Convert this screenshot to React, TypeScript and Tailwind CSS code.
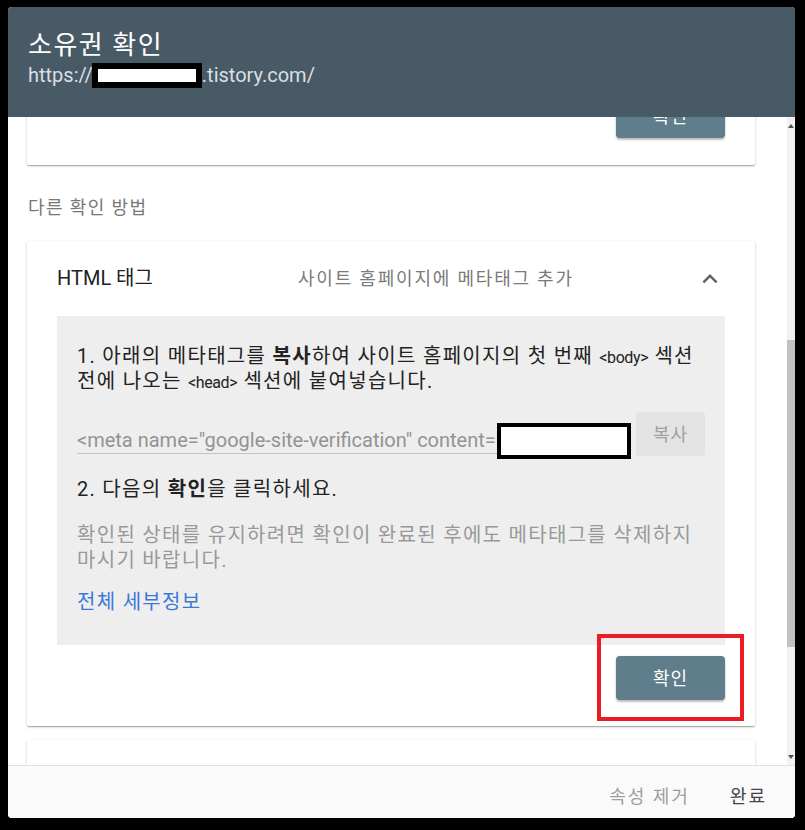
import React from "react";

export default function App() {
  return (
    <div className="w-[805px] h-[830px] bg-black pl-[8px] pt-[7px] pr-[10px] pb-[12px] font-[Roboto,'Noto_Sans_CJK_KR',sans-serif]">
      <div className="h-full flex flex-col bg-white rounded-[4px] overflow-hidden">
        {/* Header */}
        <header className="h-[110px] shrink-0 bg-[#485a66] pl-[20px] pt-[22px]">
          <div className="text-[26px] leading-[32px] text-white tracking-[1.5px]">소유권 확인</div>
          <div className="flex items-center text-[20px] leading-[28px] text-[#d9dfe3]">
            <span>https://</span>
            <span className="inline-block w-[110px] h-[25px] -ml-[1px] bg-white border-[6px] border-black"></span>
            <span>.tistory.com/</span>
          </div>
        </header>

        {/* Scroll area */}
        <div className="flex-1 min-h-0 flex">
          <div className="flex-1 overflow-hidden pl-[19px] pr-[32px]">
            {/* Card 1 (scrolled partially out) */}
            <div className="-mt-[72px] h-[120px] bg-white rounded-[2px] shadow-[0_1px_3px_rgba(0,0,0,0.2),0_1px_1px_rgba(0,0,0,0.14),0_2px_1px_-1px_rgba(0,0,0,0.12)] flex items-end justify-end pr-[30px] pb-[27px]">
              <button className="w-[109px] h-[44px] rounded-[4px] bg-[#607d8b] text-white text-[18px] tracking-[1px] shadow-[0_2px_2px_rgba(0,0,0,0.24),0_0_2px_rgba(0,0,0,0.12)]">
                확인
              </button>
            </div>

            <div className="mt-[31px] text-[18px] leading-[24px] text-[#777777] pl-[1px] tracking-[1.4px]">다른 확인 방법</div>

            {/* Card 2 */}
            <div className="mt-[21px] bg-white rounded-[2px] shadow-[0_1px_3px_rgba(0,0,0,0.2),0_1px_1px_rgba(0,0,0,0.14),0_2px_1px_-1px_rgba(0,0,0,0.12)] px-[30px] pb-[26px]">
              <div className="h-[75px] flex items-center">
                <div className="w-[241px] text-[20px] leading-[25px] text-[#212121]">HTML 태그</div>
                <div className="flex-1 text-[18px] leading-[24px] text-[#7a7a7a] tracking-[1.8px]">사이트 홈페이지에 메타태그 추가</div>
                <svg width="30" height="30" viewBox="0 0 24 24" className="shrink-0">
                  <path d="M12 8l-6 6 1.41 1.41L12 10.83l4.59 4.58L18 14z" fill="#5f6368" />
                </svg>
              </div>

              <div className="bg-[#eeeeee] px-[20px] pt-[28px] pb-[30px] text-[20px] leading-[25px]">
                <p className="text-[#222222] tracking-[1.3px] break-keep">
                  1. 아래의 메타태그를 <b className="font-bold">복사</b>하여 사이트 홈페이지의 첫 번째{" "}
                  <span className="text-[16px] leading-none tracking-[-0.4px]">&lt;body&gt;</span> 섹션 전에 나오는{" "}
                  <span className="text-[16px] leading-none tracking-[-0.4px]">&lt;head&gt;</span> 섹션에 붙여넣습니다.
                </p>

                <div className="relative mt-[18px] h-[44px] flex items-end gap-[16px]">
                  <div className="flex-1 mb-[2px] border-b border-[#c4c4c4] overflow-hidden whitespace-nowrap text-[#939393]">
                    &lt;meta name="google-site-verification" content="xxxxxxxxxxxxxxxxxxxxxxxxxxxxxx" /&gt;
                  </div>
                  <button className="w-[69px] h-[44px] shrink-0 self-start rounded-[4px] bg-[#e3e3e3] text-[18px] text-[#a0a0a0] tracking-[1px]">
                    복사
                  </button>
                  <div className="absolute left-[420px] top-[11px] w-[134px] h-[36px] bg-white border-[4px] border-black"></div>
                </div>

                <p className="mt-[21px] text-[#222222] tracking-[1.3px] break-keep">
                  2. 다음의 <b className="font-bold">확인</b>을 클릭하세요.
                </p>

                <p className="mt-[21px] text-[#999999] tracking-[1.3px] break-keep">
                  확인된 상태를 유지하려면 확인이 완료된 후에도 메타태그를 삭제하지 마시기 바랍니다.
                </p>

                <p className="mt-[17px] text-[#3c78d8] tracking-[1.3px]">전체 세부정보</p>
              </div>

              <div className="mt-[11px] flex justify-end">
                <div className="relative">
                  <button className="w-[109px] h-[44px] rounded-[4px] bg-[#607d8b] text-white text-[18px] tracking-[1px] shadow-[0_2px_2px_rgba(0,0,0,0.24),0_0_2px_rgba(0,0,0,0.12)]">
                    확인
                  </button>
                  <div className="absolute -left-[19px] -top-[22px] -right-[19px] -bottom-[21px] border-[4px] border-[#ec1c24]"></div>
                </div>
              </div>
            </div>

            {/* Card 3 (partially visible) */}
            <div className="mt-[14px] h-[120px] bg-white rounded-[2px] shadow-[0_1px_3px_rgba(0,0,0,0.2),0_1px_1px_rgba(0,0,0,0.14),0_2px_1px_-1px_rgba(0,0,0,0.12)]"></div>
          </div>

          {/* Scrollbar */}
          <div className="w-[8px] shrink-0 bg-[#f1f1f1] flex flex-col">
            <div className="h-[17px] flex items-center justify-center">
              <div className="w-0 h-0 border-x-[3px] border-x-transparent border-b-[4px] border-b-[#505050]"></div>
            </div>
            <div className="h-[206px]"></div>
            <div className="h-[307px] bg-[#c1c1c1]"></div>
            <div className="flex-1"></div>
            <div className="h-[17px] flex items-center justify-center">
              <div className="w-0 h-0 border-x-[3px] border-x-transparent border-t-[4px] border-t-[#505050]"></div>
            </div>
          </div>
        </div>

        {/* Footer */}
        <footer className="h-[53px] shrink-0 bg-[#fafafa] border-t border-[#e2e2e2] flex justify-end items-start pt-[19px] pr-[28px] gap-[40px] text-[18px] leading-[24px] tracking-[2px]">
          <span className="text-[#9e9e9e]">속성 제거</span>
          <span className="text-[#444444]">완료</span>
        </footer>
      </div>
    </div>
  );
}
